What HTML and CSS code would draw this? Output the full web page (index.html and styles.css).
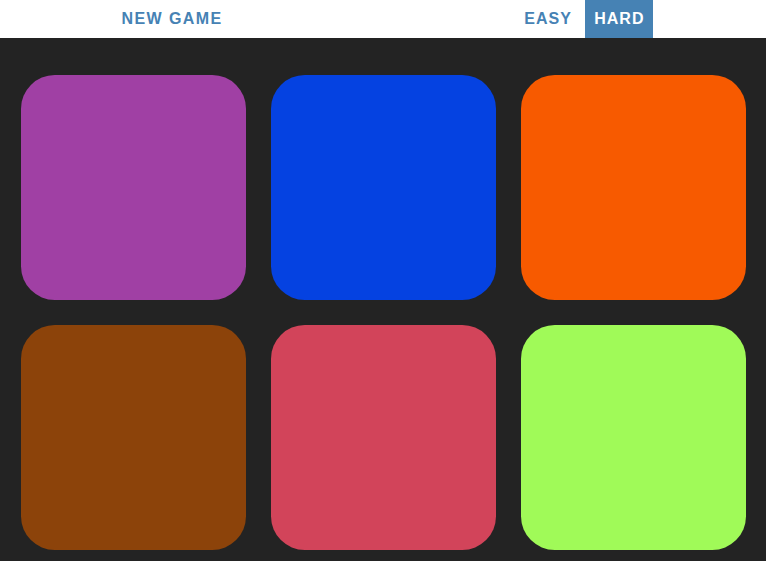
FILE: index.html
```html
<!DOCTYPE html>
<html>
<head>
<meta charset="utf-8">
<title>Colour Game</title>
<link rel="stylesheet" href="styles.css">
</head>
<body>
<div class="stripe">
  <button class="btn btn-new">New Game</button>
  <span class="message"></span>
  <button class="btn">Easy</button>
  <button class="btn selected">Hard</button>
</div>
<div class="board">
  <div class="square sq-purple"></div>
  <div class="square sq-blue"></div>
  <div class="square sq-orange"></div>
  <div class="square sq-brown"></div>
  <div class="square sq-red"></div>
  <div class="square sq-green"></div>
</div>
</body>
</html>
```

FILE: styles.css
```css
html, body {
  margin: 0;
  padding: 0;
  height: 100%;
}
body {
  background: #232323;
  font-family: "Liberation Sans", Arial, sans-serif;
}
.stripe {
  background: #fff;
  height: 38px;
  display: flex;
  justify-content: center;
  align-items: stretch;
  gap: 4.4px;
}
.btn {
  border: none;
  background: none;
  margin: 0;
  padding: 0 9px;
  font-family: "Liberation Sans", Arial, sans-serif;
  font-size: 16px;
  font-weight: 700;
  letter-spacing: 1px;
  text-transform: uppercase;
  color: #4682b4;
  height: 38px;
}
.btn-new {
  letter-spacing: 1.4px;
}
.btn.selected {
  background: #4682b4;
  color: #fff;
}
.message {
  width: 275px;
}
.board {
  display: grid;
  grid-template-columns: repeat(3, 225px);
  grid-auto-rows: 225px;
  gap: 25px;
  padding: 37px 20px 0 21px;
}
.square {
  border-radius: 15%;
}
.sq-purple { background: rgb(160, 64, 164); }
.sq-blue { background: rgb(5, 66, 225); }
.sq-orange { background: rgb(247, 90, 0); }
.sq-brown { background: rgb(140, 67, 10); }
.sq-red { background: rgb(210, 68, 90); }
.sq-green { background: rgb(160, 250, 88); }
```
